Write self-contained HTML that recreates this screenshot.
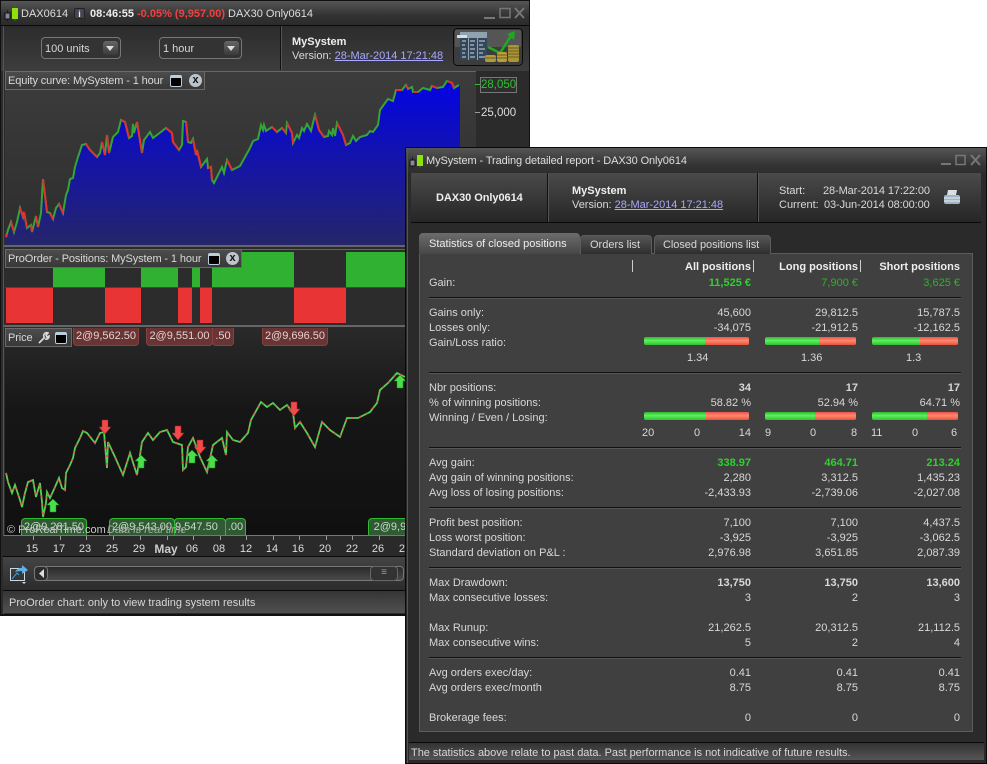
<!DOCTYPE html>
<html><head><meta charset="utf-8"><style>
html,body{margin:0;padding:0;background:#fff}
body{width:987px;height:764px;position:relative;overflow:hidden;font:11px/14px "Liberation Sans",sans-serif;color:#d8d8d8}
div,span.t,a,svg{position:absolute}
.t{position:absolute;white-space:nowrap;margin-top:1px}
b{font-weight:bold}
a{position:static;color:#a9a9ff;text-decoration:underline}
.a{right:236px}.b{right:129px}.c{right:27px}
.l{left:429px}
.hl{left:429px;width:532px;height:1px;background:#111;box-shadow:0 1px 0 #555}
.g{color:#2fd02f}
.bar{height:8px;border-radius:2px;background:linear-gradient(#2fb82f,#5ff05f 45%,#2fc02f)}
.bar i{position:absolute;top:0;bottom:0;right:0;border-radius:0 2px 2px 0;background:linear-gradient(#f05050,#ff8a6a 45%,#e85040)}
.sep{width:1px;height:12px;background:#ccc}
.dd{border:1px solid #777;border-radius:4px;background:#333;box-sizing:border-box;height:22px}
.btn{background:linear-gradient(#666,#3a3a3a);border-radius:3px;width:15px;height:14px;top:3px}
.btn:after{content:"";position:absolute;left:3px;top:5px;border:4px solid transparent;border-top:5px solid #ddd;border-bottom:0}
.lg{background:linear-gradient(#4c4c4c,#383838);border:1px solid #6a6a6a;box-sizing:border-box;height:19px;letter-spacing:-.12px}
.lg .t{margin-top:0}
.rt{top:328px;height:18px;background:#683434;border:1px solid #8a4040;border-top:0;border-radius:0 0 4px 4px;box-sizing:border-box;line-height:17px;text-align:center;color:#e6d0d0;font-size:11px;overflow:hidden}
.gt{top:518px;height:17px;background:#2f5a33;border:1px solid #2ebb2e;border-bottom:0;border-radius:4px 4px 0 0;box-sizing:border-box;line-height:16px;text-align:center;color:#c8dcc8;overflow:hidden}
.dl{top:541px;transform:translateX(-50%);font-size:11px;color:#ddd}
.tick{top:536px;width:1px;height:4px;background:#999}
</style></head><body>

<!-- LEFT WINDOW -->
<div style="left:0;top:0;width:530px;height:616px;background:#2b2b2b;border:1px solid #111;box-sizing:border-box;overflow:hidden">
<div style="left:0;top:0;width:528px;height:24px;background:linear-gradient(#555,#333 60%,#2b2b2b)"></div>
<div style="left:0;top:24px;width:528px;height:1px;background:#0a0a0a"></div>
<div style="left:0;top:25px;width:528px;height:45px;background:linear-gradient(#2c2c2c,#3d3d3d)"></div>
<div style="left:2px;top:25px;width:1px;height:590px;background:#555"></div>
</div>

<svg style="left:4px;top:5px" width="16" height="18"><line x1="3.500" y1="5" x2="3.500" y2="17" stroke="#222"/><rect x="1" y="8" width="5" height="6" fill="#889" stroke="#111"/><line x1="11" y1="0" x2="11" y2="16" stroke="#3a6a10"/><rect x="8" y="3" width="6" height="11" fill="#8fe010"/></svg>
<span class="t" style="left:21px;top:6px;color:#ddd">DAX0614</span>
<div style="left:74px;top:8px;width:11px;height:11px;background:#444454;border:1px solid #222;border-radius:2px;box-sizing:border-box;color:#eee;font:bold 9px/10px 'Liberation Sans',sans-serif;text-align:center">i</div>
<span class="t" style="left:90px;top:6px;color:#eee"><b>08:46:55</b></span>
<span class="t" style="left:137px;top:6px;color:#f04040"><b>-0.05% (9,957.00)</b></span>
<span class="t" style="left:228px;top:6px;color:#ddd">DAX30 Only0614</span>
<svg style="left:482px;top:6px" width="44" height="14" fill="none" stroke="#777"><rect x="2" y="11" width="11" height="2" fill="#777" stroke="none"/><rect x="18" y="2.500" width="10" height="9" stroke-width="1.500"/><path d="M33 2l9 10M42 2l-9 10" stroke-width="2"/></svg>

<div class="dd" style="left:41px;top:37px;width:80px"><span class="t" style="left:3px;top:3px">100 units</span><div class="btn" style="left:61px"></div></div>
<div class="dd" style="left:159px;top:37px;width:83px"><span class="t" style="left:3px;top:3px">1 hour</span><div class="btn" style="left:64px"></div></div>
<div style="left:280px;top:26px;width:1px;height:44px;background:#111;box-shadow:1px 0 0 #555"></div>
<span class="t" style="left:292px;top:34px;color:#eee"><b>MySystem</b></span>
<span class="t" style="left:292px;top:48px;letter-spacing:-.02px">Version: <a>28-Mar-2014 17:21:48</a></span>

<svg style="left:453px;top:28px" width="70" height="38">
<rect x=".5" y=".5" width="69" height="37" rx="4" fill="#3c3c3c" stroke="#0a0a0a" stroke-width="1"/><rect x="2" y="2" width="66" height="17" fill="#555"/>
<rect x="7" y="4" width="27" height="28" fill="#33475a"/><rect x="7" y="4" width="27" height="6" fill="#8fa2b0"/>
<path d="M15.500 4v28M24.500 4v28" stroke="#8fa2b0"/><path d="M9 13h4M9 17h3M9 21h4M9 25h3M9 29h4M17 13h5M17 17h4M17 21h5M17 25h4M17 29h5M26 13h6M26 17h4M26 21h6M26 25h4M26 29h6" stroke="#cfd8de"/>
<rect x="4" y="7" width="10" height="3" fill="#d8dfe4"/>
<path d="M35 19l12 6 11-17" fill="none" stroke="#1eaa1e" stroke-width="2.500"/><path d="M54 6l8-3-1 9z" fill="#1eaa1e"/>
<rect x="32" y="27" width="11" height="7" rx="2" fill="#b09a3a"/><rect x="44" y="24" width="10" height="10" rx="2" fill="#b79f3c"/><rect x="55" y="17" width="11" height="17" rx="2" fill="#ab9538"/>
<path d="M44 27h10M44 30h10M55 20h11M55 23h11M55 26h11M55 29h11M32 30h11" stroke="#6e5f20"/></svg>

<!-- Equity -->
<div style="left:5px;top:71px;width:471px;height:175px;background:linear-gradient(#3c3c3c,#2d2d2d);overflow:hidden;border-top:1px solid #666;box-sizing:border-box">
<svg style="left:-5px;top:-72px" width="471" height="250">
<defs><linearGradient id="bg" x1="0" y1="82" x2="0" y2="245" gradientUnits="userSpaceOnUse"><stop offset="0" stop-color="#0404e4"/><stop offset="1" stop-color="#25256a"/></linearGradient></defs>
<path d="M6 246V237L8 230 11 222 14 232 17 222 20 208 23 217 24 212 27 228 31 225 32 232 36 216 38 227 41 213 43 179 47 212 50 213 53 219 56 208 59 204 63 213 66 195 68 190 70 179 73 178 75 167 78 157 82 145 86 144 90 150 97 157 100 153 102 142 105 155 107 135 109 153 113 137 118 132 121 120 125 122 129 138 132 136 133 124 134 133 137 122 142 153 144 140 150 132 153 138 157 135 166 128 172 133 173 142 179 150 182 145 183 121 186 122 188 142 191 143 193 139 196 155 197 150 201 167 207 159 208 168 211 167 212 180 214 183 222 167 224 173 227 160 232 170 240 166 250 148 253 141 258 139 261 125 263 130 264 125 266 131 272 127 277 132 282 128 286 133 287 123 292 133 293 143 297 135 299 138 302 128 304 131 307 124 311 131 315 115 319 130 324 137 328 136 329 131 332 135 333 128 335 136 337 123 343 135 346 145 350 143 353 136 356 141 360 137 367 135 370 131 373 132 378 125 380 110 385 103 388 99 393 101 396 90 402 90 406 85 408 89 412 87 413 92 418 92 423 88 430 90 432 86 437 88 443 87 447 81 452 83 454 88 459 85 460 85V246Z" fill="url(#bg)"/>
<polyline points="6,237 8,230 11,222 14,232 17,222 20,208 23,217 24,212 27,228 31,225 32,232 36,216 38,227 41,213 43,179 47,212 50,213 53,219 56,208 59,204 63,213 66,195 68,190 70,179 73,178 75,167 78,157 82,145 86,144 90,150 97,157 100,153 102,142 105,155 107,135 109,153 113,137 118,132 121,120 125,122 129,138 132,136 133,124 134,133 137,122 142,153 144,140 150,132 153,138 157,135 166,128 172,133 173,142 179,150 182,145 183,121 186,122 188,142 191,143 193,139 196,155 197,150 201,167 207,159 208,168 211,167 212,180 214,183 222,167 224,173 227,160 232,170 240,166 250,148 253,141 258,139 261,125 263,130 264,125 266,131 272,127 277,132 282,128 286,133 287,123 292,133 293,143 297,135 299,138 302,128 304,131 307,124 311,131 315,115 319,130 324,137 328,136 329,131 332,135 333,128 335,136 337,123 343,135 346,145 350,143 353,136 356,141 360,137 367,135 370,131 373,132 378,125 380,110 385,103 388,99 393,101 396,90 402,90 406,85 408,89 412,87 413,92 418,92 423,88 430,90 432,86 437,88 443,87 447,81 452,83 454,88 459,85" fill="none" stroke="#35a535" stroke-width="2"/>
<path d="M6 234L7 237M11 222L14 232M20 208L23 217M24 212L27 228M31 225L32 232M36 216L38 227M43 179L47 212M50 213L53 219M59 204L63 213M86 144L90 150 97 157M102 142L105 155M107 135L109 153M121 120L125 122 129 138M137 122L142 153M166 128L172 133 173 142 179 150M186 122L188 142M193 139L196 155M197 150L201 167M208 168L211 167 212 180M227 160L232 170M272 127L277 132M282 128L286 133M287 123L292 133 293 143M315 115L319 130 324 137M337 123L343 135 346 145M396 90L402 90M406 85L408 89M413 92L418 92M432 86L437 88M447 81L452 83 454 88" fill="none" stroke="#e03030" stroke-width="2"/>
</svg></div>
<div class="lg" style="left:5px;top:71px;width:200px"><span class="t" style="left:2px;top:2px">Equity curve: MySystem - 1 hour</span>
<div style="left:164px;top:3px;width:12px;height:12px;background:#000;border:1px solid #bcd;border-top-width:3px;border-radius:2px;box-sizing:border-box"></div>
<div style="left:183px;top:2px;width:13px;height:13px;background:#bcc4cc;border-radius:50%;color:#111;font:bold 11px/13px 'Liberation Sans',sans-serif;text-align:center">x</div></div>
<div style="left:475px;top:84px;width:5px;height:1px;background:#2fc22f"></div>
<div style="left:480px;top:77px;width:37px;height:16px;background:#2e2e2e;border:1px solid #777;box-sizing:border-box;color:#2fc22f;line-height:15px;font-size:11.500px;text-align:center">28,050</div>
<div style="left:475px;top:112px;width:5px;height:1px;background:#999"></div>
<span class="t" style="left:481px;top:105px;font-size:11.500px;color:#ddd">25,000</span>
<div style="left:4px;top:245px;width:472px;height:2px;background:#666"></div>

<!-- Positions -->
<div style="left:5px;top:249px;width:471px;height:75px;background:#2c2c2c;border-top:1px solid #666;box-sizing:border-box"></div>
<div style="left:53px;top:252px;width:52px;height:35px;background:#31b131"></div>
<div style="left:141px;top:252px;width:37px;height:35px;background:#31b131"></div>
<div style="left:192px;top:252px;width:8px;height:35px;background:#31b131"></div>
<div style="left:212px;top:252px;width:82px;height:35px;background:#31b131"></div>
<div style="left:346px;top:252px;width:100px;height:35px;background:#31b131"></div>
<div style="left:6px;top:288px;width:47px;height:35px;background:#e83434"></div>
<div style="left:105px;top:288px;width:36px;height:35px;background:#e83434"></div>
<div style="left:178px;top:288px;width:14px;height:35px;background:#e83434"></div>
<div style="left:200px;top:288px;width:12px;height:35px;background:#e83434"></div>
<div style="left:294px;top:288px;width:52px;height:35px;background:#e83434"></div>
<div style="left:5px;top:287px;width:440px;height:1px;background:#3a3aa0"></div>
<div class="lg" style="left:5px;top:249px;width:237px"><span class="t" style="left:2px;top:2px">ProOrder - Positions: MySystem - 1 hour</span>
<div style="left:202px;top:3px;width:12px;height:12px;background:#000;border:1px solid #bcd;border-top-width:3px;border-radius:2px;box-sizing:border-box"></div>
<div style="left:220px;top:2px;width:13px;height:13px;background:#bcc4cc;border-radius:50%;color:#111;font:bold 11px/13px 'Liberation Sans',sans-serif;text-align:center">x</div></div>
<div style="left:4px;top:325px;width:472px;height:2px;background:#666"></div>

<!-- Price -->
<div style="left:5px;top:327px;width:471px;height:209px;background:linear-gradient(#2a2a2a,#161616 40%,#101010);overflow:hidden">
<svg style="left:-5px;top:-327px" width="471" height="540">
<polyline points="6,473 8,482 12,493 15,485 20,500 22,507 25,493 28,482 33,480 36,497 40,483 42,502 43,517 46,503 47,492 50,498 55,487 59,478 62,488 65,490 66,473 70,465 73,458 75,448 80,438 83,431 87,433 95,443 100,433 104,432 107,468 108,442 115,457 123,475 130,453 137,475 142,442 148,433 153,440 160,432 167,430 173,442 182,445 183,470 186,467 188,447 193,438 200,457 207,472 213,445 222,438 226,455 227,432 233,440 240,442 248,433 251,420 261,402 267,407 273,403 280,410 287,405 293,413 295,428 300,422 307,433 315,447 322,422 330,430 340,437 347,418 358,418 370,412 377,403 380,390 388,383 397,373 405,377" fill="none" stroke="#52d252" stroke-width="1.800"/>
<polyline points="6,473 8,482 12,493 15,485 20,500 22,507 25,493 28,482 33,480 36,497 40,483 42,502 43,517 46,503 47,492 50,498 55,487 59,478 62,488 65,490 66,473 70,465 73,458 75,448 80,438 83,431 87,433 95,443 100,433 104,432 107,468 108,442 115,457 123,475 130,453 137,475 142,442 148,433 153,440 160,432 167,430 173,442 182,445 183,470 186,467 188,447 193,438 200,457 207,472 213,445 222,438 226,455 227,432 233,440 240,442 248,433 251,420 261,402 267,407 273,403 280,410 287,405 293,413 295,428 300,422 307,433 315,447 322,422 330,430 340,437 347,418 358,418 370,412 377,403 380,390 388,383 397,373 405,377" fill="none" stroke="#d85a5a" stroke-width="1.800" stroke-dasharray="2 6"/>
<g fill="#4ade4a" stroke="#1f8a1f" stroke-width=".5"><path d="M53 499l6 6h-3v7h-6v-7h-3z"/><path d="M141 455l6 6h-3v7h-6v-7h-3z"/><path d="M192 450l6 6h-3v7h-6v-7h-3z"/><path d="M212 455l6 6h-3v7h-6v-7h-3z"/><path d="M400 375l6 6h-3v7h-6v-7h-3z"/></g>
<g fill="#f04a4a" stroke="#a02020" stroke-width=".5"><path d="M102 420h6v7h3l-6 7-6-7h3z"/><path d="M175 426h6v7h3l-6 7-6-7h3z"/><path d="M197 440h6v7h3l-6 7-6-7h3z"/><path d="M291 402h6v7h3l-6 7-6-7h3z"/></g>
</svg></div>
<div class="lg" style="left:5px;top:328px;width:67px"><span class="t" style="left:2px;top:2px">Price</span>
<svg style="left:31px;top:2px" width="14" height="14" fill="none" stroke="#ddd" stroke-width="1.600"><path d="M2 12l6-6M7 6a3 3 0 0 1 4-4l-2 2 1 2 2-1a3 3 0 0 1-4 3"/></svg>
<div style="left:49px;top:3px;width:12px;height:12px;background:#000;border:1px solid #bcd;border-top-width:3px;border-radius:2px;box-sizing:border-box"></div></div>
<div class="rt" style="left:73px;width:66px">2@9,562.50</div>
<div class="rt" style="left:146px;width:67px">2@9,551.00</div>
<div class="rt" style="left:212px;width:22px">.50</div>
<div class="rt" style="left:262px;width:66px">2@9,696.50</div>
<div class="gt" style="left:21px;width:66px">2@9,281.50</div>
<div class="gt" style="left:109px;width:66px">2@9,543.00</div>
<div class="gt" style="left:174px;width:52px;text-align:left"> 9,547.50</div>
<div class="gt" style="left:225px;width:21px">.00</div>
<div class="gt" style="left:368px;width:50px">2@9,95</div>
<span class="t" style="left:7px;top:522px;color:#c8c8c8">© ProRealTime.com</span>
<span class="t" style="left:107px;top:522px;color:#aaa;font-style:italic">Data is real time</span>
<div style="left:4px;top:535px;width:472px;height:1px;background:#777"></div>

<div style="left:3px;top:536px;width:473px;height:21px;background:#2a2a2a"></div>
<span class="t dl" style="left:32px">15</span><span class="t dl" style="left:59px">17</span><span class="t dl" style="left:85px">23</span><span class="t dl" style="left:112px">25</span><span class="t dl" style="left:139px">29</span><span class="t dl" style="left:166px;font-size:12px;font-weight:bold;color:#ccc">May</span><span class="t dl" style="left:192px">06</span><span class="t dl" style="left:219px">08</span><span class="t dl" style="left:246px">12</span><span class="t dl" style="left:272px">14</span><span class="t dl" style="left:298px">16</span><span class="t dl" style="left:325px">20</span><span class="t dl" style="left:352px">22</span><span class="t dl" style="left:378px">26</span><span class="t dl" style="left:405px">28</span>
<div class="tick" style="left:33px"></div><div class="tick" style="left:60px"></div><div class="tick" style="left:86px"></div><div class="tick" style="left:113px"></div><div class="tick" style="left:140px"></div><div class="tick" style="left:167px"></div><div class="tick" style="left:193px"></div><div class="tick" style="left:220px"></div><div class="tick" style="left:246px"></div><div class="tick" style="left:273px"></div><div class="tick" style="left:299px"></div><div class="tick" style="left:326px"></div><div class="tick" style="left:352px"></div><div class="tick" style="left:379px"></div>

<div style="left:3px;top:556px;width:524px;height:1px;background:#0a0a0a"></div>
<div style="left:3px;top:557px;width:524px;height:33px;background:linear-gradient(#444,#2c2c2c)"></div>
<svg style="left:9px;top:564px" width="20" height="20" fill="none"><rect x="1.500" y="4.500" width="14" height="12" stroke="#cfd8e0"/><path d="M3 15l5-6 2 2" stroke="#3aa0e0"/><path d="M6 8q3-5 7-4V1l6 5-6 4V7q-4 0-7 1z" fill="#5fb0e8"/><path d="M13 18l4 0-2 2z" fill="#ddd"/></svg>
<div style="left:34px;top:566px;width:370px;height:15px;background:linear-gradient(#2a2a2a,#4a4a4a);border:1px solid #777;border-radius:4px;box-sizing:border-box"></div>
<div style="left:34px;top:566px;width:14px;height:15px;background:#2c2c2c;border:1px solid #777;border-radius:4px;box-sizing:border-box"><svg style="left:3px;top:2px" width="7" height="9"><path d="M6 0v9L1 4.500z" fill="#ddd"/></svg></div>
<div style="left:370px;top:566px;width:28px;height:15px;background:#333;border:1px solid #666;border-radius:4px;box-sizing:border-box;color:#999;font-size:10px;line-height:12px;text-align:center">≡</div>
<div style="left:3px;top:590px;width:524px;height:1px;background:#0a0a0a"></div>
<div style="left:3px;top:591px;width:524px;height:22px;background:linear-gradient(#353535,#505050)"></div>
<span class="t" style="left:9px;top:595px">ProOrder chart: only to view trading system results</span>

<div style="left:0;top:614px;width:530px;height:2px;background:#111"></div>

<!-- RIGHT WINDOW -->
<div style="left:405px;top:147px;width:582px;height:617px;background:#2a2a2a;border:1px solid #0a0a0a;box-sizing:border-box">
<div style="left:0;top:0;width:580px;height:25px;background:linear-gradient(#555,#333 70%,#2e2e2e)"></div>
<div style="left:5px;top:25px;width:570px;height:49px;background:linear-gradient(#4a4a4a,#262626)"></div>
<div style="left:5px;top:74px;width:570px;height:1px;background:#0a0a0a"></div>
<div style="left:1px;top:1px;width:1px;height:614px;background:#555"></div>
</div>
<svg style="left:409px;top:152px" width="16" height="18"><line x1="3.500" y1="5" x2="3.500" y2="17" stroke="#222"/><rect x="1" y="8" width="5" height="6" fill="#889" stroke="#111"/><line x1="11" y1="0" x2="11" y2="16" stroke="#3a6a10"/><rect x="8" y="3" width="6" height="11" fill="#8fe010"/></svg>
<span class="t" style="left:426px;top:153px;color:#ddd;letter-spacing:-.1px">MySystem - Trading detailed report - DAX30 Only0614</span>
<svg style="left:940px;top:153px" width="44" height="14" fill="none" stroke="#777"><rect x="1" y="10" width="10" height="2" fill="#777" stroke="none"/><rect x="16" y="2.500" width="9" height="9" stroke-width="1.500"/><path d="M31 2l9 10M40 2l-9 10" stroke-width="2"/></svg>

<div style="left:547px;top:173px;width:1px;height:49px;background:#111;box-shadow:1px 0 0 #555"></div>
<div style="left:757px;top:173px;width:1px;height:49px;background:#111;box-shadow:1px 0 0 #555"></div>
<span class="t" style="left:436px;top:190px;color:#eee;letter-spacing:-.05px"><b>DAX30 Only0614</b></span>
<span class="t" style="left:572px;top:183px;color:#eee"><b>MySystem</b></span>
<span class="t" style="left:572px;top:197px;letter-spacing:-.02px">Version: <a>28-Mar-2014 17:21:48</a></span>
<span class="t" style="left:779px;top:183px">Start:</span><span class="t" style="left:823px;top:183px;letter-spacing:-.1px">28-Mar-2014 17:22:00</span>
<span class="t" style="left:779px;top:197px">Current:</span><span class="t" style="left:824px;top:197px;letter-spacing:-.1px">03-Jun-2014 08:00:00</span>
<svg style="left:943px;top:189px" width="18" height="17"><path d="M5 1h9l-1 5H4z" fill="#d8e0e6"/><rect x="1" y="6" width="16" height="9" rx="2" fill="#9fb4c4"/><path d="M1 9h16M1 12h16" stroke="#e8eef2"/></svg>

<!-- Tabs -->
<div style="left:419px;top:253px;width:554px;height:479px;background:#404040;border:1px solid #5c5c5c;box-sizing:border-box"></div>
<div style="left:580px;top:235px;width:72px;height:19px;background:linear-gradient(#555,#2e2e2e);border:1px solid #5c5c5c;border-bottom:0;border-radius:4px 4px 0 0;box-sizing:border-box"></div>
<div style="left:654px;top:235px;width:117px;height:19px;background:linear-gradient(#555,#2e2e2e);border:1px solid #5c5c5c;border-bottom:0;border-radius:4px 4px 0 0;box-sizing:border-box"></div>
<div style="left:419px;top:233px;width:161px;height:21px;background:linear-gradient(#6c6c6c,#474747);border-radius:4px 4px 0 0"></div>
<span class="t" style="left:429px;top:236px;color:#eee">Statistics of closed positions</span>
<span class="t" style="left:590px;top:237px">Orders list</span>
<span class="t" style="left:663px;top:237px;letter-spacing:-.05px">Closed positions list</span>

<!-- header -->
<div class="sep" style="left:632px;top:260px"></div><div class="sep" style="left:753px;top:260px"></div><div class="sep" style="left:860px;top:260px"></div>
<span class="t a" style="top:259px;color:#eee"><b>All positions</b></span><span class="t b" style="top:259px;color:#eee"><b>Long positions</b></span><span class="t c" style="top:259px;color:#eee"><b>Short positions</b></span>
<span class="t l" style="top:275px">Gain:</span><span class="t a g" style="top:275px"><b>11,525 €</b></span><span class="t b" style="top:275px;color:#25b825">7,900 €</span><span class="t c" style="top:275px;color:#25b825">3,625 €</span>
<div class="hl" style="top:297px"></div>

<span class="t l" style="top:305px">Gains only:</span><span class="t a" style="top:305px">45,600</span><span class="t b" style="top:305px">29,812.5</span><span class="t c" style="top:305px">15,787.5</span>
<span class="t l" style="top:320px">Losses only:</span><span class="t a" style="top:320px">-34,075</span><span class="t b" style="top:320px">-21,912.5</span><span class="t c" style="top:320px">-12,162.5</span>
<span class="t l" style="top:335px">Gain/Loss ratio:</span>
<div class="bar" style="left:644px;top:337px;width:105px"><i style="left:61px"></i></div>
<div class="bar" style="left:765px;top:337px;width:91px"><i style="left:54px"></i></div>
<div class="bar" style="left:872px;top:337px;width:86px"><i style="left:48px"></i></div>
<span class="t" style="left:687px;top:350px">1.34</span><span class="t" style="left:801px;top:350px">1.36</span><span class="t" style="left:906px;top:350px">1.3</span>
<div class="hl" style="top:372px"></div>

<span class="t l" style="top:380px">Nbr positions:</span><span class="t a" style="top:380px"><b>34</b></span><span class="t b" style="top:380px"><b>17</b></span><span class="t c" style="top:380px"><b>17</b></span>
<span class="t l" style="top:395px">% of winning positions:</span><span class="t a" style="top:395px">58.82 %</span><span class="t b" style="top:395px">52.94 %</span><span class="t c" style="top:395px">64.71 %</span>
<span class="t l" style="top:410px">Winning / Even / Losing:</span>
<div class="bar" style="left:644px;top:412px;width:105px"><i style="left:62px"></i></div>
<div class="bar" style="left:765px;top:412px;width:91px"><i style="left:50px"></i></div>
<div class="bar" style="left:872px;top:412px;width:86px"><i style="left:55px"></i></div>
<span class="t" style="left:642px;top:425px">20</span><span class="t" style="left:694px;top:425px">0</span><span class="t a" style="top:425px">14</span>
<span class="t" style="left:765px;top:425px">9</span><span class="t" style="left:810px;top:425px">0</span><span class="t" style="left:851px;top:425px">8</span>
<span class="t" style="left:871px;top:425px">11</span><span class="t" style="left:912px;top:425px">0</span><span class="t" style="left:951px;top:425px">6</span>
<div class="hl" style="top:447px"></div>

<span class="t l" style="top:455px">Avg gain:</span><span class="t a g" style="top:455px"><b>338.97</b></span><span class="t b g" style="top:455px"><b>464.71</b></span><span class="t c g" style="top:455px"><b>213.24</b></span>
<span class="t l" style="top:470px">Avg gain of winning positions:</span><span class="t a" style="top:470px">2,280</span><span class="t b" style="top:470px">3,312.5</span><span class="t c" style="top:470px">1,435.23</span>
<span class="t l" style="top:485px">Avg loss of losing positions:</span><span class="t a" style="top:485px">-2,433.93</span><span class="t b" style="top:485px">-2,739.06</span><span class="t c" style="top:485px">-2,027.08</span>
<div class="hl" style="top:507px"></div>

<span class="t l" style="top:515px">Profit best position:</span><span class="t a" style="top:515px">7,100</span><span class="t b" style="top:515px">7,100</span><span class="t c" style="top:515px">4,437.5</span>
<span class="t l" style="top:530px">Loss worst position:</span><span class="t a" style="top:530px">-3,925</span><span class="t b" style="top:530px">-3,925</span><span class="t c" style="top:530px">-3,062.5</span>
<span class="t l" style="top:545px">Standard deviation on P&amp;L :</span><span class="t a" style="top:545px">2,976.98</span><span class="t b" style="top:545px">3,651.85</span><span class="t c" style="top:545px">2,087.39</span>
<div class="hl" style="top:567px"></div>

<span class="t l" style="top:575px">Max Drawdown:</span><span class="t a" style="top:575px"><b>13,750</b></span><span class="t b" style="top:575px"><b>13,750</b></span><span class="t c" style="top:575px"><b>13,600</b></span>
<span class="t l" style="top:590px">Max consecutive losses:</span><span class="t a" style="top:590px">3</span><span class="t b" style="top:590px">2</span><span class="t c" style="top:590px">3</span>

<span class="t l" style="top:620px">Max Runup:</span><span class="t a" style="top:620px">21,262.5</span><span class="t b" style="top:620px">20,312.5</span><span class="t c" style="top:620px">21,112.5</span>
<span class="t l" style="top:635px">Max consecutive wins:</span><span class="t a" style="top:635px">5</span><span class="t b" style="top:635px">2</span><span class="t c" style="top:635px">4</span>
<div class="hl" style="top:657px"></div>

<span class="t l" style="top:665px">Avg orders exec/day:</span><span class="t a" style="top:665px">0.41</span><span class="t b" style="top:665px">0.41</span><span class="t c" style="top:665px">0.41</span>
<span class="t l" style="top:680px">Avg orders exec/month</span><span class="t a" style="top:680px">8.75</span><span class="t b" style="top:680px">8.75</span><span class="t c" style="top:680px">8.75</span>
<span class="t l" style="top:710px">Brokerage fees:</span><span class="t a" style="top:710px">0</span><span class="t b" style="top:710px">0</span><span class="t c" style="top:710px">0</span>

<div style="left:409px;top:742px;width:575px;height:1px;background:#0a0a0a"></div>
<div style="left:409px;top:743px;width:575px;height:17px;background:linear-gradient(#333,#555)"></div>
<span class="t" style="left:411px;top:745px;letter-spacing:-.02px">The statistics above relate to past data. Past performance is not indicative of future results.</span>
</body></html>
